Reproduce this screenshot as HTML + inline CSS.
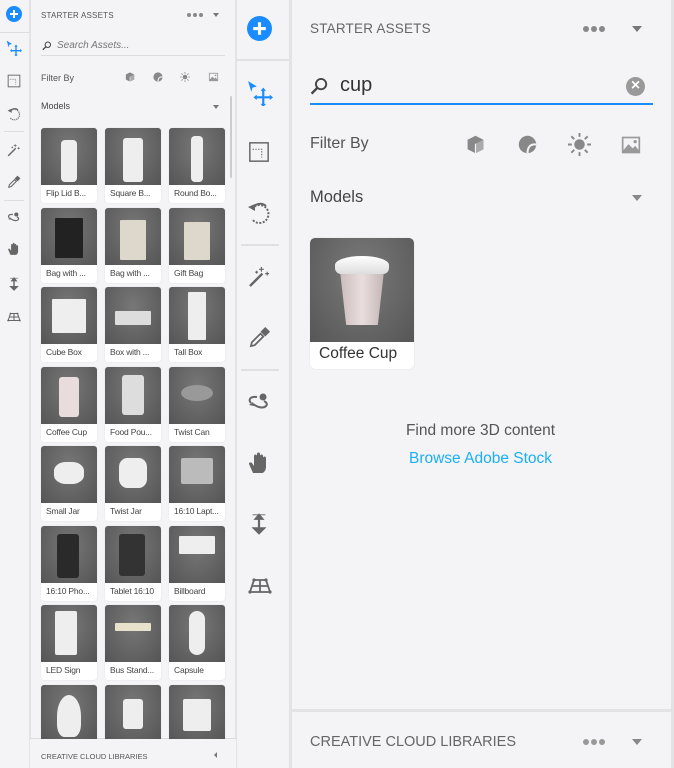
<!DOCTYPE html>
<html><head><meta charset="utf-8"><style>
*{margin:0;padding:0;box-sizing:border-box}
body{width:674px;height:768px;background:#f4f3f6;font-family:"Liberation Sans",sans-serif;position:relative;overflow:hidden;color:#4b4b4b}
.a{position:absolute}
.vl{position:absolute;top:0;bottom:0;width:2px;background:#e3e2e5}
.th{position:absolute;width:56px;height:75px;background:#fff;border-radius:3px;overflow:hidden;box-shadow:0 0 1px #ccc}
.th .im{position:absolute;left:0;top:0;width:56px;height:57px;background:radial-gradient(ellipse at 50% 35%,#777,#555)}
.th .lb{position:absolute;left:5px;top:60px;font-size:8.5px;color:#444;white-space:nowrap;letter-spacing:-.2px}
.sh{position:absolute;background:#eee}
.dots{position:absolute;display:flex;gap:2px}
.dots i{display:block;border-radius:50%;background:#888}
svg{position:absolute;overflow:visible}
</style></head><body>
<svg width="0" height="0" style="position:absolute">
<defs>
<symbol id="plus" viewBox="0 0 24 24"><circle cx="12" cy="12" r="12" fill="#1a8cff"/><path d="M12 6v12M6 12h12" stroke="#fff" stroke-width="3"/></symbol>
<symbol id="move" viewBox="0 0 24 24"><path d="M1 1l8 5-4 1-1 4z" fill="#1a8cff"/><path d="M15 9v14M8 16h14" stroke="#1a8cff" stroke-width="2"/><path d="M15 7l-2.5 3h5zM15 25l-2.5-3h5zM6 16l3-2.5v5zM24 16l-3-2.5v5z" fill="#1a8cff"/></symbol>
<symbol id="crop" viewBox="0 0 24 24"><rect x="2" y="2" width="20" height="20" fill="none" stroke="#666" stroke-width="1.6"/><path d="M5 9h10v9" stroke="#666" stroke-width="1.2" stroke-dasharray="1.5 1.5" fill="none"/></symbol>
<symbol id="rot" viewBox="0 0 24 24"><path d="M5 8a9 9 0 1 1 0 10" fill="none" stroke="#666" stroke-width="2" stroke-dasharray="2 1.5"/><path d="M5 8a9 9 0 0 1 14-3" fill="none" stroke="#666" stroke-width="2"/><path d="M1 6l7-3 0 7z" fill="#666"/></symbol>
<symbol id="wand" viewBox="0 0 24 24"><path d="M2 22L15 9" stroke="#666" stroke-width="2.5"/><path d="M14 2v5M11.5 4.5h5M20 7v4M18 9h4M9 6v3M7.5 7.5h3" stroke="#666" stroke-width="1.2"/></symbol>
<symbol id="drop" viewBox="0 0 24 24"><path d="M3 21l1-4 9-9 3 3-9 9z" fill="none" stroke="#666" stroke-width="1.8"/><path d="M13 6l5-5 5 5-5 5z" fill="#666"/></symbol>
<symbol id="lasso" viewBox="0 0 24 24"><path d="M10 6C3 5 1 9 4 12M6 13c4 3 10 5 13 2 2-2 0-4-2-5" fill="none" stroke="#666" stroke-width="2"/><circle cx="16" cy="6" r="3.5" fill="#666"/><path d="M2 14l4-3 1 4z" fill="#666"/></symbol>
<symbol id="hand" viewBox="0 0 24 24"><path d="M6 22L2 13c0-2 2-2 3-1l2 3V5c0-2 3-2 3 0V3c0-2 3-2 3 0v2c0-2 3-2 3 0v2c0-2 3-2 3 0v9c0 3-2 6-4 6z" fill="#666"/></symbol>
<symbol id="arr" viewBox="0 0 24 24"><path d="M12 4v16" stroke="#666" stroke-width="2.4"/><path d="M5 2h14M12 1l-5 6h10zM12 23l-7-7h14z" fill="#666" stroke="#666" stroke-width="1"/></symbol>
<symbol id="persp" viewBox="0 0 24 24"><path d="M6 6h12l4 12H2zM12 6v12M4 12h16" fill="none" stroke="#666" stroke-width="1.8"/><circle cx="6" cy="6" r="1.6" fill="#666"/><circle cx="18" cy="6" r="1.6" fill="#666"/><circle cx="2" cy="18" r="1.6" fill="#666"/><circle cx="22" cy="18" r="1.6" fill="#666"/></symbol>
<symbol id="srch" viewBox="0 0 24 24"><circle cx="14" cy="9" r="6.5" fill="none" stroke="#444" stroke-width="2.4"/><path d="M9 14l-7 7" stroke="#444" stroke-width="3"/></symbol>
<symbol id="cube" viewBox="0 0 24 24"><path d="M12 1l10 5v12l-10 5-10-5V6z" fill="#888"/><path d="M12 11l10-5v12l-10 5z" fill="#aaa"/><path d="M12 11v12" stroke="#f4f3f6" stroke-width="1.5"/></symbol>
<symbol id="mat" viewBox="0 0 24 24"><circle cx="12" cy="12" r="11" fill="#888"/><path d="M12 23c0-8 4-12 11-11" fill="none" stroke="#f4f3f6" stroke-width="2.5"/></symbol>
<symbol id="sun" viewBox="0 0 24 24"><circle cx="12" cy="12" r="5.5" fill="#888"/><path d="M12 0v4M12 20v4M0 12h4M20 12h4M3.5 3.5l3 3M17.5 17.5l3 3M3.5 20.5l3-3M17.5 6.5l3-3" stroke="#888" stroke-width="2"/></symbol>
<symbol id="img" viewBox="0 0 24 24"><rect x="1" y="2" width="22" height="20" fill="#999"/><rect x="3" y="4" width="18" height="14" fill="#f4f3f6"/><path d="M3 18l6-7 5 5 3-3 4 5z" fill="#999"/><circle cx="17" cy="8" r="2" fill="#999"/></symbol>
</defs></svg>

<div class="vl" style="left:29px;width:2px"></div>
<div class="vl" style="left:235px;width:2px"></div>
<div class="vl" style="left:289px;width:3px"></div>
<div class="vl" style="left:671px;width:3px"></div>
<div class="a" style="left:290px;top:709px;width:384px;height:3px;background:#e3e2e5"></div>
<div class="a" style="left:30px;top:738px;width:206px;height:1px;background:#dcdcdc"></div>

<svg style="left:6px;top:6px" width="16" height="16"><use href="#plus"/></svg>
<div class="a" style="left:0;top:32px;width:29px;height:1px;background:#ddd"></div>
<svg style="left:6px;top:40px" width="16" height="16"><use href="#move"/></svg>
<svg style="left:7px;top:74px" width="14" height="14"><use href="#crop"/></svg>
<svg style="left:7px;top:107px" width="14" height="14"><use href="#rot"/></svg>
<div class="a" style="left:4px;top:131px;width:20px;height:1px;background:#ddd"></div>
<svg style="left:7px;top:143px" width="14" height="14"><use href="#wand"/></svg>
<svg style="left:7px;top:175px" width="14" height="14"><use href="#drop"/></svg>
<div class="a" style="left:4px;top:200px;width:20px;height:1px;background:#ddd"></div>
<svg style="left:7px;top:211px" width="14" height="14"><use href="#lasso"/></svg>
<svg style="left:7px;top:242px" width="14" height="14"><use href="#hand"/></svg>
<svg style="left:7px;top:277px" width="14" height="14"><use href="#arr"/></svg>
<svg style="left:6px;top:310px" width="16" height="14"><use href="#persp"/></svg>

<div class="a" style="left:41px;top:11px;font-size:8px;color:#555;letter-spacing:.2px">STARTER ASSETS</div>
<div class="dots" style="left:187px;top:13px"><i style="width:4px;height:4px"></i><i style="width:4px;height:4px"></i><i style="width:4px;height:4px"></i></div>
<div class="a" style="left:213px;top:13px;width:0;height:0;border-left:3.5px solid transparent;border-right:3.5px solid transparent;border-top:4px solid #777"></div>
<svg style="left:42px;top:41px" width="10" height="10"><use href="#srch"/></svg>
<div class="a" style="left:57px;top:40px;font-size:10px;color:#777;font-style:italic">Search Assets...</div>
<div class="a" style="left:41px;top:55px;width:184px;height:1px;background:#ddd"></div>
<div class="a" style="left:41px;top:73px;font-size:9px;color:#555">Filter By</div>
<svg style="left:125px;top:72px" width="10" height="10"><use href="#cube"/></svg>
<svg style="left:153px;top:72px" width="10" height="10"><use href="#mat"/></svg>
<svg style="left:180px;top:72px" width="10" height="10"><use href="#sun"/></svg>
<svg style="left:208px;top:72px" width="11" height="10"><use href="#img"/></svg>
<div class="a" style="left:41px;top:101px;font-size:9px;color:#444">Models</div>
<div class="a" style="left:213px;top:105px;width:0;height:0;border-left:3.5px solid transparent;border-right:3.5px solid transparent;border-top:4px solid #777"></div>
<div class="a" style="left:230px;top:96px;width:2px;height:82px;background:#ccc;border-radius:1px"></div>

<div id="grid"></div>

<div class="a" style="left:30px;top:739px;width:206px;height:29px;background:#f4f3f6"></div>
<div class="a" style="left:41px;top:752px;font-size:7.5px;color:#555">CREATIVE CLOUD LIBRARIES</div>
<div class="a" style="left:214px;top:752px;width:0;height:0;border-top:3px solid transparent;border-bottom:3px solid transparent;border-right:3px solid #777"></div>

<svg style="left:247px;top:16px" width="25" height="25"><use href="#plus"/></svg>
<div class="a" style="left:236px;top:59px;width:53px;height:2px;background:#e0e0e0"></div>
<svg style="left:247px;top:80px" width="26" height="26"><use href="#move"/></svg>
<svg style="left:248px;top:141px" width="22" height="22"><use href="#crop"/></svg>
<svg style="left:247px;top:201px" width="24" height="24"><use href="#rot"/></svg>
<div class="a" style="left:241px;top:244px;width:38px;height:2px;background:#e0e0e0"></div>
<svg style="left:248px;top:265px" width="23" height="23"><use href="#wand"/></svg>
<svg style="left:248px;top:326px" width="23" height="23"><use href="#drop"/></svg>
<div class="a" style="left:241px;top:369px;width:38px;height:2px;background:#e0e0e0"></div>
<svg style="left:246px;top:391px" width="26" height="24"><use href="#lasso"/></svg>
<svg style="left:247px;top:451px" width="24" height="24"><use href="#hand"/></svg>
<svg style="left:248px;top:512px" width="22" height="24"><use href="#arr"/></svg>
<svg style="left:245px;top:574px" width="30" height="24"><use href="#persp"/></svg>

<div class="a" style="left:310px;top:21px;font-size:13.5px;color:#666;letter-spacing:.2px">STARTER ASSETS</div>
<div class="dots" style="left:583px;top:26px"><i style="width:6px;height:6px"></i><i style="width:6px;height:6px"></i><i style="width:6px;height:6px"></i></div>
<div class="a" style="left:632px;top:26px;width:0;height:0;border-left:5px solid transparent;border-right:5px solid transparent;border-top:6px solid #777"></div>
<svg style="left:310px;top:77px" width="19" height="19"><use href="#srch"/></svg>
<div class="a" style="left:340px;top:74px;font-size:20px;color:#333">cup</div>
<div class="a" style="left:626px;top:77px;width:19px;height:19px;border-radius:50%;background:#999;color:#fff;font-size:16px;line-height:18px;text-align:center;font-weight:bold">×</div>
<div class="a" style="left:310px;top:103px;width:343px;height:2px;background:#1a8cff"></div>
<div class="a" style="left:310px;top:135px;font-size:16px;color:#555">Filter By</div>
<svg style="left:466px;top:135px" width="19" height="19"><use href="#cube"/></svg>
<svg style="left:518px;top:135px" width="19" height="19"><use href="#mat"/></svg>
<svg style="left:568px;top:133px" width="23" height="23"><use href="#sun"/></svg>
<svg style="left:620px;top:135px" width="22" height="20"><use href="#img"/></svg>
<div class="a" style="left:310px;top:188px;font-size:16.5px;color:#444">Models</div>
<div class="a" style="left:632px;top:195px;width:0;height:0;border-left:5px solid transparent;border-right:5px solid transparent;border-top:6px solid #888"></div>

<div class="a" style="left:310px;top:238px;width:104px;height:131px;background:#fff;border-radius:5px;overflow:hidden;box-shadow:0 0 1px #ccc">
 <div class="a" style="left:0;top:0;width:104px;height:104px;background:radial-gradient(ellipse at 50% 35%,#7a7a7a,#565656)"></div>
 <div class="a" style="left:30px;top:33px;width:44px;height:54px;background:linear-gradient(90deg,#cbbcbc,#e9dede,#c4b5b5);clip-path:polygon(0 0,100% 0,86% 100%,14% 100%);border-radius:0 0 8px 8px"></div>
 <div class="a" style="left:25px;top:18px;width:54px;height:18px;background:linear-gradient(#fff,#ddd);border-radius:50% 50% 6px 6px"></div>
 <div class="a" style="left:9px;top:107px;font-size:15.5px;color:#333">Coffee Cup</div>
</div>

<div class="a" style="left:290px;top:422px;width:381px;text-align:center;font-size:15.5px;color:#555">Find more 3D content</div>
<div class="a" style="left:290px;top:450px;width:381px;text-align:center;font-size:15.5px;color:#1ab0f5">Browse Adobe Stock</div>

<div class="a" style="left:310px;top:734px;font-size:14.5px;color:#666">CREATIVE CLOUD LIBRARIES</div>
<div class="dots" style="left:583px;top:739px"><i style="width:6px;height:6px;background:#999"></i><i style="width:6px;height:6px;background:#999"></i><i style="width:6px;height:6px;background:#999"></i></div>
<div class="a" style="left:632px;top:739px;width:0;height:0;border-left:5px solid transparent;border-right:5px solid transparent;border-top:6px solid #888"></div>

<script>
var L=["Flip Lid B...","Square B...","Round Bo...","Bag with ...","Bag with ...","Gift Bag","Cube Box","Box with ...","Tall Box","Coffee Cup","Food Pou...","Twist Can","Small Jar","Twist Jar","16:10 Lapt...","16:10 Pho...","Tablet 16:10","Billboard","LED Sign","Bus Stand...","Capsule","","",""];
var S=[[20,12,16,42,"#eee","4px"],[18,10,20,44,"#eee","3px"],[22,8,12,46,"#eee","4px"],
[14,10,28,40,"#222","1px"],[15,12,26,40,"#ddd7cc","1px"],[15,14,26,38,"#ddd7cc","1px"],
[11,12,34,34,"#eee","1px"],[10,24,36,14,"#ddd","1px"],[19,5,18,48,"#eee","1px"],
[18,10,20,40,"#e8dcdc","3px"],[17,8,22,40,"#ddd","3px"],[12,18,32,16,"#999","50%"],
[13,16,30,22,"#eee","40%"],[14,12,28,30,"#eee","30%"],[12,12,32,26,"#bbb","2px"],
[16,8,22,44,"#2a2a2a","3px"],[14,8,26,42,"#333","3px"],[10,10,36,18,"#eee","1px"],
[14,6,22,44,"#eee","2px"],[10,18,36,8,"#e8e2cc","1px"],[20,6,16,44,"#eee","8px"],
[16,10,24,42,"#eee","50% 50% 30% 30%"],[18,14,20,30,"#eee","3px"],[14,14,28,32,"#eee","2px"]];
var h="",xs=[41,105,169];
for(var i=0;i<24;i++){var r=Math.floor(i/3),c=i%3,y=128+r*79.5,s=S[i];
h+='<div class="th" style="left:'+xs[c]+'px;top:'+y+'px"><div class="im"></div><div class="sh" style="left:'+s[0]+'px;top:'+s[1]+'px;width:'+s[2]+'px;height:'+s[3]+'px;background:'+s[4]+';border-radius:'+s[5]+'"></div><div class="lb">'+L[i]+'</div></div>';}
document.getElementById("grid").innerHTML=h;
</script>
</body></html>
